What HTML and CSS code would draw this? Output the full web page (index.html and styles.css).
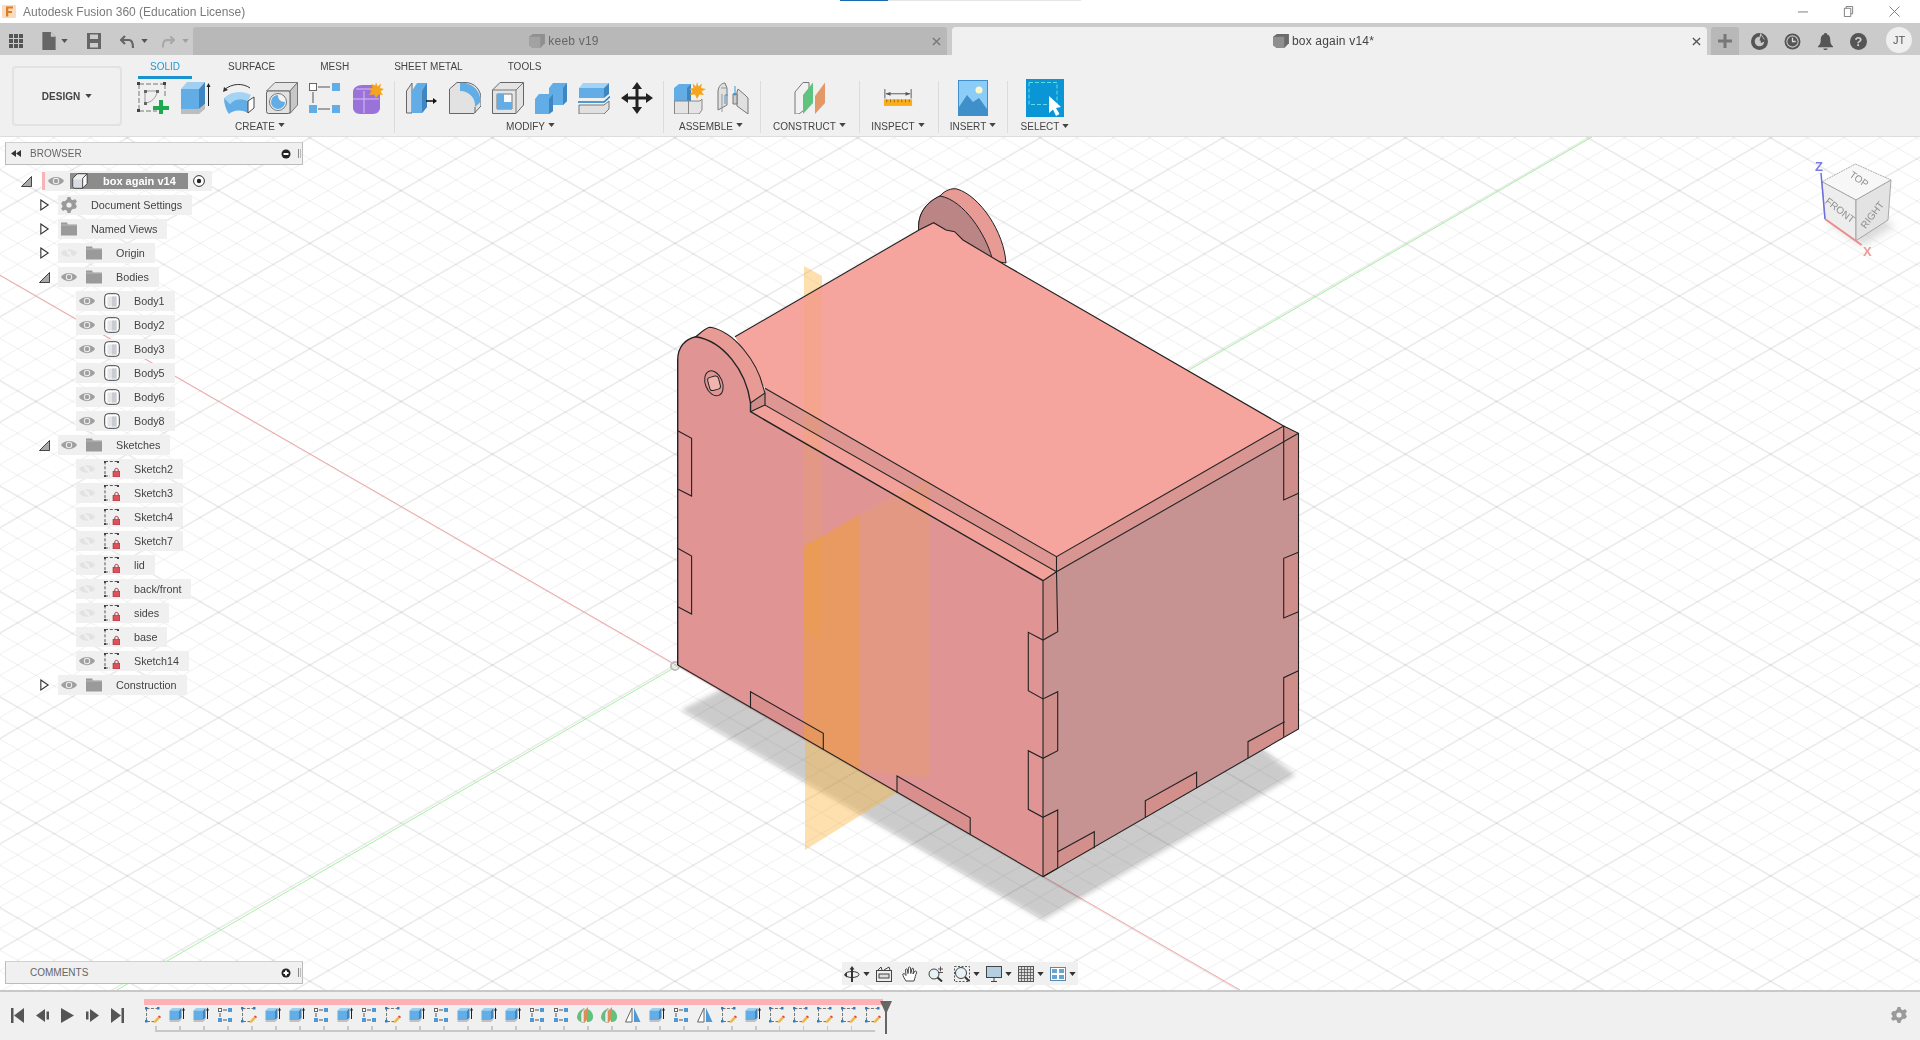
FILE: index.html
```html
<!DOCTYPE html>
<html lang="en">
<head>
<meta charset="utf-8">
<title>Autodesk Fusion 360</title>
<link rel="stylesheet" href="styles.css">
</head>
<body>
<svg class="defs" aria-hidden="true">
  <defs>
    <symbol id="i-sketch" viewBox="0 0 32 32">
      <path d="M2 2H28M2 2V29M2 29H20M28 2V14" fill="none" stroke="#777" stroke-width="1" stroke-dasharray="5 2"/>
      <rect x="0" y="0" width="3" height="3" fill="#444"/><rect x="26" y="0" width="3" height="3" fill="#444"/><rect x="0" y="27" width="3" height="3" fill="#444"/>
      <path d="M8 9H20M8 9V21M20 9C20 15 14 21 8 21" fill="none" stroke="#999" stroke-width="1"/>
      <rect x="7" y="8" width="3" height="3" fill="#666"/><rect x="19" y="8" width="3" height="3" fill="#666"/><rect x="7" y="20" width="3" height="3" fill="#666"/>
      <path d="M22 18h4v6h6v4h-6v5h-4v-5h-6v-4h6z" fill="#1ea84f"/>
    </symbol>
    <symbol id="i-extrude" viewBox="0 0 32 32">
      <path d="M1 7L7 0H25L19 7Z" fill="#9fd0f2"/>
      <path d="M1 7H19V27H1Z" fill="#62ade6"/>
      <path d="M19 7L25 0V22L19 27Z" fill="#3f86c0"/>
      <path d="M1 27H19L25 22V27L19 32H1Z" fill="#bdbdbd"/>
      <path d="M28.5 24V3" stroke="#222" stroke-width="1"/><path d="M26.5 5L28.5 1L30.5 5Z" fill="#222"/>
    </symbol>
    <symbol id="i-revolve" viewBox="0 0 32 32">
      <path d="M1 8C9 1 20 1 27 6" fill="none" stroke="#333" stroke-width="1"/><path d="M0 10L1 5L5 8Z" fill="#333"/>
      <path d="M1 16C8 9 19 8 28 13L25 19C18 16 11 17 7 22Z" fill="#a4d4f4"/>
      <path d="M1 16L7 22C11 17 18 16 25 19V31C18 27 10 28 6 32C3 28 1 22 1 16Z" fill="#62ade6"/>
      <path d="M25 19L31 15V26L25 31Z" fill="#fff" stroke="#444" stroke-width="1"/>
    </symbol>
    <symbol id="i-hole" viewBox="0 0 32 32">
      <path d="M.5 9L9 .5H31.5L24 9Z" fill="#e6e6e6" stroke="#777"/>
      <path d="M24 9L31.5 .5V23L24 31.5Z" fill="#c7c7c7" stroke="#777"/>
      <rect x=".5" y="9" width="23.5" height="22.5" rx="2" fill="#e2e2e2" stroke="#666"/>
      <circle cx="12" cy="20" r="8.5" fill="#f3f3f3" stroke="#777"/>
      <path d="M12 13A7 7 0 1 0 19 20C14 20 12 17 12 13Z" fill="#62ade6"/>
    </symbol>
    <symbol id="i-pattern" viewBox="0 0 32 32">
      <rect x=".5" y="1.500" width="7" height="7" fill="#fff" stroke="#666"/><rect x="23" y="1" width="8" height="8" fill="#62ade6"/>
      <rect x="0" y="23" width="8" height="8" fill="#62ade6"/><rect x="23" y="23" width="8" height="8" fill="#62ade6"/>
      <path d="M9 5H21M4 10V21M9 27H21" stroke="#555" stroke-width="1"/>
    </symbol>
    <symbol id="i-form" viewBox="0 0 32 32">
      <path d="M1 10C1 6 5 3 10 3H22L28 8V26C28 29 25 32 21 32H8C4 32 1 29 1 26Z" fill="#9b72d9"/>
      <path d="M1 17H27M12 9V31M4 7H22" stroke="#d6c2ef" stroke-width="1" fill="none"/>
      <path d="M24 0L25.500 4.500L29 1.500L28 6L32 7L28.500 9.500L31 13L26.500 12.500L24 16L22 12.500L17 13L19.500 9L16 7L20.500 6L19.500 1.500L23 4.500Z" fill="#f5a41d"/>
    </symbol>
    <symbol id="i-press" viewBox="0 0 32 32">
      <path d="M.5 9L6 1V31H.5Z" fill="#e4e4e4" stroke="#666"/>
      <path d="M6 9L11 1H21V25L16 31H6Z" fill="#62ade6"/>
      <path d="M16 9L21 1V25L16 31Z" fill="#3f86c0"/>
      <path d="M20 19H28" stroke="#111" stroke-width="1.500"/><path d="M27 16L31 19L27 22Z" fill="#111"/>
    </symbol>
    <symbol id="i-fillet" viewBox="0 0 32 32">
      <path d="M.5 31.500V7L8 .5H16C26 .5 32 8 32 17V24L25 31.500Z" fill="#e2e2e2" stroke="#666"/>
      <path d="M11 .8C22 0 32 8 31.500 20L26 25C27 16 20 9 11 9Z" fill="#62ade6"/>
      <path d="M26 25V31" stroke="#666"/>
    </symbol>
    <symbol id="i-shell" viewBox="0 0 32 32">
      <path d="M.5 8L8 .5H31.500V23L24 31.500H.5Z" fill="#e4e4e4" stroke="#666"/>
      <path d="M24 8H.5M24 8V31M24 8L31 1" stroke="#777" fill="none"/>
      <path d="M5 12H20V27H5Z" fill="#fafafa" stroke="#777"/>
      <path d="M5 12H12V20H20V27H5Z" fill="#62ade6"/>
    </symbol>
    <symbol id="i-combine" viewBox="0 0 32 32">
      <path d="M14 6L18 1H32V19L28 23H14Z" fill="#62ade6"/>
      <path d="M28 6L32 1V19L28 23Z" fill="#3f86c0"/>
      <path d="M0 17L4 12H18V29L14 32H0Z" fill="#62ade6"/>
      <path d="M14 17L18 12V29L14 32Z" fill="#3f86c0"/>
    </symbol>
    <symbol id="i-split" viewBox="0 0 32 32">
      <path d="M1 6L5 1H31L26 6Z" fill="#a4d4f4"/>
      <path d="M1 6H26V16H1Z" fill="#62ade6"/><path d="M26 6L31 1V12L26 16Z" fill="#3f86c0"/>
      <path d="M1 23H26L31 19V27L26 32H1Z" fill="#e0e0e0" stroke="#777"/>
      <path d="M0 20H26L32 14.500" fill="none" stroke="#1a7ec8" stroke-width="1.500"/>
    </symbol>
    <symbol id="i-move" viewBox="0 0 32 32">
      <path d="M16 0L21 7H17.500V14.500H25V11L32 16L25 21V17.500H17.500V25H21L16 32L11 25H14.500V17.500H7V21L0 16L7 11V14.500H14.500V7H11Z" fill="#222"/>
    </symbol>
    <symbol id="i-new" viewBox="0 0 32 32">
      <path d="M0 19V6L5 2H17V19Z" fill="#62ade6"/><path d="M0 6H13V19H0Z" fill="#62ade6"/><path d="M13 6L17 2V19H13Z" fill="#3f86c0"/>
      <rect x=".5" y="19" width="14" height="13" fill="#e4e4e4" stroke="#888"/><path d="M14.500 19H26L28 17V28L25 32H14.500Z" fill="#e4e4e4" stroke="#888"/>
      <path d="M23 0L24.500 4.500L28 1.500L27 6L32 7L27.500 9.500L30 13L25.500 12.500L23 17L21 12.500L16 13L18.500 9L15 7L19.500 6L18.500 1.500L22 4.500Z" fill="#f5a41d"/>
    </symbol>
    <symbol id="i-joint" viewBox="0 0 32 32">
      <path d="M1 28V10C1 4 5 1 8 1L10 6V23Z" fill="#e0e0e0" stroke="#777"/>
      <path d="M10 6H4M5 12V30" stroke="#999" fill="none"/>
      <path d="M21 7L28 13L31 16V32L20 24V10Z" fill="#e0e0e0" stroke="#777"/>
      <path d="M16 12H20V22H16Z" fill="#cfcfcf" stroke="#777"/>
      <path d="M8 22V13H11M18 4V13" stroke="#3f97d8" stroke-width="1" fill="none"/>
      <path d="M16 11L18 14L20 11Z" fill="#3f97d8"/>
    </symbol>
    <symbol id="i-construct" viewBox="0 0 32 32">
      <path d="M1 10L9 .5H15V24L5 32H1Z" fill="#f1f1f1" stroke="#777"/>
      <path d="M9 13L19 .5V21L9 32Z" fill="#5fc27e"/>
      <path d="M21 14L31 .5V21L21 32Z" fill="#e29867"/>
    </symbol>
    <symbol id="i-inspect" viewBox="0 0 32 18">
      <path d="M2 0V10M30 0V10M3 5H29" stroke="#555" fill="none"/>
      <path d="M3 5L8 3V7ZM29 5L24 3V7Z" fill="#555"/>
      <rect x="1" y="11" width="30" height="7" fill="#f9ad1a"/>
      <path d="M4 11v3M8 11v3M12 11v3M16 11v3M20 11v3M24 11v3M28 11v3" stroke="#9b6a10"/>
    </symbol>
    <symbol id="i-insert" viewBox="0 0 30 36">
      <rect x=".5" y=".5" width="29" height="35" fill="#8ccdf7" stroke="#3f8fca"/>
      <circle cx="21" cy="10" r="3.500" fill="#fdf9c8"/>
      <path d="M1 27L9 15L15 22L21 18L29 29V35H1Z" fill="#3f8fca"/>
    </symbol>
    <symbol id="i-select" viewBox="0 0 38 38">
      <rect width="38" height="38" fill="#0a96d6"/>
      <rect x="3" y="3.500" width="28" height="22" fill="none" stroke="#5fdde0" stroke-width="1" stroke-dasharray="4 2"/>
      <path d="M23 17V34L27 30.500L30 37L33.500 35L30 29L35 28Z" fill="#fff"/>
    </symbol>

    <symbol id="t-sk" viewBox="0 0 16 16">
      <path d="M1.500 1.500H13.500M1.500 1.500V14.500H9" fill="none" stroke="#777" stroke-dasharray="3 1.500"/>
      <rect x="0" y="0" width="2.500" height="2.500" fill="#2d7fc2"/><rect x="12" y="0" width="2.500" height="2.500" fill="#2d7fc2"/><rect x="0" y="13" width="2.500" height="2.500" fill="#2d7fc2"/>
      <path d="M9 14L14 8.500L16 10L11 15.500L8.500 16Z" fill="#f0b545"/><path d="M14 8.500L16 10L15 11L13 9.500Z" fill="#e0404a"/>
    </symbol>
    <symbol id="t-ext" viewBox="0 0 16 16">
      <path d="M.5 3.500L3 1H12.500L10 3.500Z" fill="#9fd0f2"/>
      <path d="M.5 3.500H10V13H.5Z" fill="#62ade6"/><path d="M10 3.500L12.500 1V11L10 13Z" fill="#3f86c0"/>
      <path d="M.5 13H10L12.500 11V12.500L10 15H.5Z" fill="#c2c2c2"/>
      <path d="M14.500 12V2" stroke="#222"/><path d="M13 3.500L14.500 .5L16 3.500Z" fill="#222"/>
    </symbol>
    <symbol id="t-pat" viewBox="0 0 16 16">
      <rect x="1.500" y="1.500" width="3" height="3" fill="#fff" stroke="#666"/><rect x="11" y="1" width="4" height="4" fill="#4f9ad6"/>
      <rect x="1" y="11" width="4" height="4" fill="#4f9ad6"/><rect x="11" y="11" width="4" height="4" fill="#4f9ad6"/>
      <path d="M6 3H10M3 6V10M6 13H10" stroke="#555"/>
    </symbol>
    <symbol id="t-con" viewBox="0 0 16 16">
      <path d="M0 11C0 6 3 3 6 2V15C3 15 1 14 0 11Z" fill="#5fc27e"/>
      <path d="M10 2C14 3 16 6 16 10C16 13 14 15 10 15Z" fill="#5fc27e"/>
      <path d="M4 6L7 1V16L4 15Z" fill="#eee" stroke="#888" stroke-width=".5"/>
      <path d="M7 4L11 0V12L7 16Z" fill="#de8d55"/>
    </symbol>
    <symbol id="t-mir" viewBox="0 0 16 16">
      <path d="M7 1V15H.5Z" fill="#fff" stroke="#666"/><path d="M9 1L15.500 15H9Z" fill="#4f9ad6"/>
    </symbol>

    <symbol id="u-eye" viewBox="0 0 16 12">
      <path d="M0 6C3 .5 13 .5 16 6C13 11.500 3 11.500 0 6Z" fill="#a0a0a0"/>
      <circle cx="8" cy="6" r="3.200" fill="#f0f0f0"/><circle cx="8" cy="6" r="2.200" fill="#a0a0a0"/>
    </symbol>
    <symbol id="u-eyeoff" viewBox="0 0 16 12">
      <path d="M0 6C3 1 13 1 16 6C13 11 3 11 0 6Z" fill="#e2e2e2"/>
      <path d="M3 0L13 12" stroke="#f2f2f2" stroke-width="1.500"/>
      <circle cx="8" cy="6" r="2" fill="#efefef"/>
    </symbol>
    <symbol id="u-folder" viewBox="0 0 16 13">
      <path d="M0 0H6L7 2H16V13H0Z" fill="#9a9a9a"/><path d="M0 2.500H16" stroke="#c9c9c9" stroke-width=".7"/>
    </symbol>
    <symbol id="u-gear" viewBox="0 0 16 16">
      <path d="M6.500 0H9.500L10 2.300L12 3.200L14 2L16 4.500L14.400 6.200L15 8L16 9.500L14 12L12 11.800L10 13.700L9.500 16H6.500L6 13.700L4 12.800L2 14L0 11.500L1.600 9.800L1 8L0 6.500L2 4L4 4.200L6 2.300Z" fill="#9a9a9a"/>
      <circle cx="8" cy="8" r="2.600" fill="#f0f0f0"/>
    </symbol>
    <symbol id="u-body" viewBox="0 0 16 16">
      <rect x=".7" y=".7" width="14.600" height="14.600" rx="3.500" fill="#fff" stroke="#444"/>
      <rect x="3.500" y="3.500" width="9" height="10" fill="#e2e4e8"/><rect x="8" y="3.500" width="4.500" height="10" fill="#c9ccd2"/>
    </symbol>
    <symbol id="u-comp" viewBox="0 0 18 18">
      <path d="M1 6L6 1H17V12L12 17H3C2 17 1 16 1 15Z" fill="#fff" stroke="#333"/>
      <path d="M2 7L6 2H16L12 7Z" fill="#eceef2"/><path d="M2 7H12V16H2Z" fill="#d9dce2"/>
      <path d="M12 6V17M12 6L17 1" stroke="#333" fill="none"/>
    </symbol>
    <symbol id="u-lock" viewBox="0 0 16 16">
      <path d="M1 .5H13.500M1 .5V15H6" fill="none" stroke="#555" stroke-dasharray="3 1.800"/>
      <rect x="0" y="0" width="2" height="2" fill="#444"/><rect x="13" y="0" width="2" height="2" fill="#444"/><rect x="0" y="14" width="2" height="2" fill="#444"/>
      <rect x="9" y="10.500" width="7" height="5.500" fill="#d9535d" stroke="#9c2c35" stroke-width=".6"/>
      <path d="M10.800 10.500V9C10.800 6.800 14.200 6.800 14.200 9V10.500" fill="none" stroke="#9c2c35"/>
    </symbol>
    <symbol id="u-open" viewBox="0 0 12 14"><path d="M2 1.500L10 7L2 12.500Z" fill="#fff" stroke="#333" stroke-width="1.200"/></symbol>
    <symbol id="u-down" viewBox="0 0 12 12"><path d="M.5 11.500L11.500 .5V11.500Z" fill="#a9a9a9" stroke="#333"/></symbol>

    <pattern id="grid-a" width="300" height="105.42" patternUnits="userSpaceOnUse" patternTransform="translate(675 665) skewY(30)">
      <path d="M0 21.080H300M0 42.170H300M0 63.250H300M0 84.340H300" stroke="#f0f0f0" stroke-width="1"/>
      <path d="M0 0H300M0 105.420H300" stroke="#dadada" stroke-width="1.200"/>
    </pattern>
    <pattern id="grid-b" width="300" height="105.42" patternUnits="userSpaceOnUse" patternTransform="translate(675 665) skewY(-30)">
      <path d="M0 21.080H300M0 42.170H300M0 63.250H300M0 84.340H300" stroke="#f0f0f0" stroke-width="1"/>
      <path d="M0 0H300M0 105.420H300" stroke="#dadada" stroke-width="1.200"/>
    </pattern>
    <filter id="soft" x="-10%" y="-10%" width="120%" height="120%"><feGaussianBlur stdDeviation="2.500"/></filter>
    <filter id="soft-more" x="-30%" y="-30%" width="160%" height="160%"><feGaussianBlur stdDeviation="4"/></filter>
  </defs>
</svg>

<div class="app">
  <header class="titlebar">
    <svg class="logo" viewBox="0 0 14 13"><rect width="14" height="13" rx="1" fill="#f7dcc0"/><path d="M4 1.500H11V3.500H6.300V6H10V8H6.300V11.500H4Z" fill="#e07b20"/></svg>
    <span class="title-text">Autodesk Fusion 360 (Education License)</span>
    <div class="progress"><span class="progress-fill"></span></div>
    <div class="winctl">
      <svg class="win-ic" viewBox="0 0 12 12"><path d="M1 6.500H12" stroke="#777"/></svg>
      <svg class="win-ic" viewBox="0 0 12 12"><path d="M3.500 2.500V.5H10.500V8.500H8.500M1.500 2.500H8.500V11.500H1.500Z" fill="none" stroke="#777"/></svg>
      <svg class="win-ic" viewBox="0 0 12 12"><path d="M.5 .5L11.500 11.500M11.500 .5L.5 11.500" stroke="#777"/></svg>
    </div>
  </header>

  <div class="tabstrip">
    <div class="qat">
      <svg class="q-grid" viewBox="0 0 14 14"><path d="M0 0h4v4H0zM5 0h4v4H5zM10 0h4v4h-4zM0 5h4v4H0zM5 5h4v4H5zM10 5h4v4h-4zM0 10h4v4H0zM5 10h4v4H5zM10 10h4v4h-4z" fill="#555"/></svg>
      <svg class="q-file" viewBox="0 0 14 19"><path d="M0 0H9L14 5V19H0Z" fill="#666"/><path d="M9 0V5H14Z" fill="#ccc"/></svg>
      <svg class="caret q-c1" viewBox="0 0 8 5"><path d="M0 0H8L4 5Z" fill="#555"/></svg>
      <svg class="q-save" viewBox="0 0 14 16"><path d="M0 0H14V16H0Z" fill="#666"/><path d="M3 1.500H11V6H3ZM3 10H11V14.500H3Z" fill="#ccc"/></svg>
      <svg class="q-undo" viewBox="0 0 15 15"><path d="M5 2L1 6L5 10M1 6H9C12 6 13 9 13 14" fill="none" stroke="#666" stroke-width="2.200"/></svg>
      <svg class="caret q-c2" viewBox="0 0 8 5"><path d="M0 0H8L4 5Z" fill="#555"/></svg>
      <svg class="q-redo" viewBox="0 0 15 15"><path d="M10 2L14 6L10 10M14 6H6C3 6 2 9 2 14" fill="none" stroke="#a8a8a8" stroke-width="2.200"/></svg>
      <svg class="caret q-c3" viewBox="0 0 8 5"><path d="M0 0H8L4 5Z" fill="#a0a0a0"/></svg>
    </div>
    <div class="tab tab-back">
      <span class="tab-label"><svg class="tab-cube" viewBox="0 0 17 15"><path d="M0 3L4 0H17V10L12 15H4L0 12Z" fill="#8f8f8f"/><path d="M0 3H12V15H4L0 12Z" fill="#a2a2a2"/></svg>keeb v19</span>
      <svg class="tab-x" viewBox="0 0 10 10"><path d="M1 1L9 9M9 1L1 9" stroke="#777" stroke-width="1.500"/></svg>
    </div>
    <div class="tab tab-active">
      <span class="tab-label"><svg class="tab-cube" viewBox="0 0 17 15"><path d="M0 3L4 0H17V10L12 15H4L0 12Z" fill="#6a6a6a"/><path d="M0 3H12V15H4L0 12Z" fill="#8f8f8f"/></svg>box again v14*</span>
      <svg class="tab-x" viewBox="0 0 10 10"><path d="M1 1L9 9M9 1L1 9" stroke="#555" stroke-width="1.500"/></svg>
    </div>
    <div class="tab-plus"><svg viewBox="0 0 14 14" class="plus-ic"><path d="M5.500 0h3v5.500H14v3H8.500V14h-3V8.500H0v-3h5.500z" fill="#777"/></svg></div>
    <div class="status-icons">
      <svg class="st-ic" viewBox="0 0 16 16"><circle cx="8" cy="8" r="8" fill="#555"/><path d="M8 3.500A4.500 4.500 0 1 0 12.500 8L9.500 9.500L8 3.500Z" fill="#c8c8c8"/><path d="M9 0L13 6L7 7Z" fill="#c8c8c8"/><path d="M9.500 2L12.500 6.500L8 7Z" fill="#555"/></svg>
      <svg class="st-ic" viewBox="0 0 16 16"><circle cx="8" cy="8" r="7.500" fill="#555"/><circle cx="8" cy="8" r="5.800" fill="#c8c8c8"/><circle cx="8" cy="8" r="4.800" fill="#555"/><path d="M8 4.500V8H11" fill="none" stroke="#ddd" stroke-width="1.200"/></svg>
      <svg class="st-ic" viewBox="0 0 16 16"><path d="M8 0C9 0 9.500 .5 9.500 1.500C12 2 12.500 4.500 12.500 7C12.500 10 13.500 11 15 12.500V13.500H1V12.500C2.500 11 3.500 10 3.500 7C3.500 4.500 4 2 6.500 1.500C6.500 .5 7 0 8 0ZM6 14.500H10C10 16.500 6 16.500 6 14.500Z" fill="#555"/></svg>
      <svg class="st-ic" viewBox="0 0 16 16"><circle cx="8" cy="8" r="8" fill="#555"/><text x="8" y="12.500" class="help-q">?</text></svg>
      <span class="avatar">JT</span>
    </div>
  </div>

  <div class="ribbon">
    <div class="design-btn">DESIGN<svg class="caret" viewBox="0 0 8 5"><path d="M0 0H8L4 5Z" fill="#444"/></svg></div>
    <div class="ribbon-main">
      <nav class="ribbon-tabs">
        <span class="rt rt-solid">SOLID</span>
        <span class="rt rt-surface">SURFACE</span>
        <span class="rt rt-mesh">MESH</span>
        <span class="rt rt-sheet">SHEET METAL</span>
        <span class="rt rt-tools">TOOLS</span>
      </nav>
      <div class="panels">
        <section class="panel p-create">
          <div class="icons">
            <svg class="ric"><use href="#i-sketch"/></svg><svg class="ric"><use href="#i-extrude"/></svg><svg class="ric"><use href="#i-revolve"/></svg><svg class="ric"><use href="#i-hole"/></svg><svg class="ric"><use href="#i-pattern"/></svg><svg class="ric"><use href="#i-form"/></svg>
          </div>
          <div class="plabel">CREATE<svg class="caret" viewBox="0 0 8 5"><path d="M0 0H8L4 5Z" fill="#444"/></svg></div>
        </section>
        <section class="panel p-modify">
          <div class="icons">
            <svg class="ric"><use href="#i-press"/></svg><svg class="ric"><use href="#i-fillet"/></svg><svg class="ric"><use href="#i-shell"/></svg><svg class="ric"><use href="#i-combine"/></svg><svg class="ric"><use href="#i-split"/></svg><svg class="ric"><use href="#i-move"/></svg>
          </div>
          <div class="plabel">MODIFY<svg class="caret" viewBox="0 0 8 5"><path d="M0 0H8L4 5Z" fill="#444"/></svg></div>
        </section>
        <section class="panel p-assemble">
          <div class="icons">
            <svg class="ric"><use href="#i-new"/></svg><svg class="ric"><use href="#i-joint"/></svg>
          </div>
          <div class="plabel">ASSEMBLE<svg class="caret" viewBox="0 0 8 5"><path d="M0 0H8L4 5Z" fill="#444"/></svg></div>
        </section>
        <section class="panel p-construct">
          <div class="icons"><svg class="ric"><use href="#i-construct"/></svg></div>
          <div class="plabel">CONSTRUCT<svg class="caret" viewBox="0 0 8 5"><path d="M0 0H8L4 5Z" fill="#444"/></svg></div>
        </section>
        <section class="panel p-inspect">
          <div class="icons"><svg class="ric-inspect"><use href="#i-inspect"/></svg></div>
          <div class="plabel">INSPECT<svg class="caret" viewBox="0 0 8 5"><path d="M0 0H8L4 5Z" fill="#444"/></svg></div>
        </section>
        <section class="panel p-insert">
          <div class="icons"><svg class="ric-insert"><use href="#i-insert"/></svg></div>
          <div class="plabel">INSERT<svg class="caret" viewBox="0 0 8 5"><path d="M0 0H8L4 5Z" fill="#444"/></svg></div>
        </section>
        <section class="panel p-select">
          <div class="icons"><svg class="ric-select"><use href="#i-select"/></svg></div>
          <div class="plabel">SELECT<svg class="caret" viewBox="0 0 8 5"><path d="M0 0H8L4 5Z" fill="#444"/></svg></div>
        </section>
      </div>
    </div>
  </div>

  <main class="viewport">
    <svg class="canvas" viewBox="0 137 1920 853">
      <rect x="0" y="137" width="1920" height="853" fill="#fff"/>
      <rect x="0" y="137" width="1920" height="853" fill="url(#grid-a)"/>
      <rect class="grid-b" x="0" y="137" width="1920" height="853" fill="url(#grid-b)"/>
      <path d="M0 275.300L1240 990" stroke="#f4a6a6" stroke-width="1"/>
      <path d="M1592 137L117 990" stroke="#a6f0a2" stroke-width="1"/>
      <circle cx="675" cy="666" r="4" fill="none" stroke="#bdbdbd" stroke-width="2"/>

      <path d="M681 710L1043 920L1295.500 775L1200 700L800 650Z" fill="#000" opacity=".2" filter="url(#soft)"/>
      <path d="M804 266L822 276V290L804 300Z" fill="#f9b233" opacity=".4"/>
      <path d="M805 738L898 792L805 850Z" fill="#f9b233" opacity=".4"/>

      <!-- back ear -->
      <path d="M918.800 232C917 215 925 203 940 196C945 190 952 188 957 189C980 196 1004 232 1006 263L1000 262Z" fill="#e89a94" stroke="#222" stroke-width="1"/>
      <path d="M918.800 232C917 215 925 203 940 196C964 200 986 235 992 258Z" fill="#bb8585"/>
      <path d="M918.800 232C917 215 925 203 940 196C964 200 986 235 992 258" fill="none" stroke="#222" stroke-width="1"/>

      <!-- top -->
      <path d="M735 336.700L919 230L933.600 222.700L946 230L954.600 231.700L963 240L1005 265L1283.700 426L1056.500 556.700L765 388.300Z" fill="#f6a49e"/>
      <!-- ledge -->
      <path d="M765 388.300L1056.500 556.700V571.700L765 405Z" fill="#dd9692"/>
      <path d="M750.500 411.700L765 405L1056.500 571.700L1043 580.700Z" fill="#f2a09a"/>
      <!-- front face -->
      <path d="M677.700 665V360C677.700 347 685 339 695.800 336.700C723 341 746 370 750.500 403V411.700L1043 580.700V876.700Z" fill="#e09594"/>
      <path d="M695.800 336.700C703 331 706 327.300 710.500 327.300C735 332 757 362 763 386.700L765 393L750.500 403C746 370 723 341 695.800 336.700Z" fill="#e89a94"/>
      <path d="M750.500 403L765 393V405L750.500 411.700Z" fill="#cf8d8a"/>
      <!-- right face -->
      <path d="M1056.500 571.700L1298.500 433.300V729L1043 876.700V580.700Z" fill="#c69292"/>
      <path d="M1056.500 556.700L1283.700 426L1298.500 433.300L1056.500 571.700Z" fill="#d99592"/>
      <path d="M1283.700 426L1298.500 433.300V493.300L1283.700 500ZM1283.700 558.300L1298.500 552.300V611.700L1283.700 618ZM1283.700 677.700L1298.500 670.700V729L1283.700 736.700Z" fill="#d08e8b"/>
      <path d="M1043 580.700L1056.500 571.700L1057.700 631.700L1043 640ZM1043 699L1057.700 691.700V750.700L1043 758.300ZM1043 817.300L1057.700 810V868.300L1043 876.700Z" fill="#d08e8b"/>
      <path d="M1057.700 851.700L1094.300 831.700V848.300L1057.700 868.300ZM1145.300 800.700L1196.600 772.300V788.300L1145.300 817.300ZM1248 741.700L1284.600 721.700V736.700L1248 758.300Z" fill="#d28f8c"/>
      <path d="M750.500 691.700L823.300 733.300V750L750.500 708.300ZM897 776L970.200 817.700V834.300L897 792.700Z" fill="#d98f8d"/>

      <!-- section plane ghost -->
      <path d="M804 296.700L822 286V548L804 546.700Z" fill="#f2a838" opacity=".16"/>
      <path d="M804 546.700L860 514V770L804 738Z" fill="#f2a030" opacity=".5"/>
      <path d="M860 514L930 479V778L860 770Z" fill="#eaa060" opacity=".3"/>
      <path d="M804 546.700L822 536V640L804 630Z" fill="#f2a030" opacity=".2"/>

      <!-- edges -->
      <g fill="none" stroke="#222" stroke-width="1.100">
        <path d="M735 336.700L919 230L933.600 222.700L946 230L954.600 231.700L963 240L1005 265L1283.700 426L1056.500 556.700L765 388.300"/>
        <path d="M677.700 665V360C677.700 347 685 339 695.800 336.700C723 341 746 370 750.500 403V411.700L1043 580.700" stroke-width="1.400"/>
        <path d="M695.800 336.700C703 331 706 327.300 710.500 327.300C735 332 757 362 763 386.700L765 393V405"/>
        <path d="M750.500 403L765 393M750.500 411.700L765 405L1056.500 571.700L1043 580.700M1056.500 556.700V571.700"/>
        <path d="M677.700 665L1043 876.700L1298.500 729V433.300L1283.700 426M1056.500 571.700L1298.500 433.300"/>
        <path d="M1043 580.700V876.700"/>
        <path d="M1056.500 571.700L1057.700 631.700L1043 640L1028.300 632.300V690.700L1043 699L1057.700 691.700V750.700L1043 758.300L1028.300 750.700V809.300L1043 817.300L1057.700 810V868.300L1043 876.700"/>
        <path d="M1283.700 426V500L1298.500 493.300M1298.500 552.300L1283.700 558.300V618L1298.500 611.700M1298.500 670.700L1283.700 677.700V736.700"/>
        <path d="M1057.700 851.700L1094.300 831.700V848.300M1145.300 817.300V800.700L1196.600 772.300V788.300M1248 758.300V741.700L1284.600 721.700"/>
        <path d="M750.500 708.300V691.700L823.300 733.300V750M897 792.700V776L970.200 817.700V834.300"/>
        <path d="M677.700 430.700L691.600 438.300V496L677.700 489M677.700 548.300L691.600 556V614L677.700 606.700"/>
      </g>
      <ellipse cx="713.900" cy="383.300" rx="8.500" ry="13" transform="rotate(-22 713.900 383.300)" fill="#e09594" stroke="#222" stroke-width="1"/>
      <rect x="708.500" y="376.500" width="11" height="13.500" rx="3" transform="rotate(-15 714 383)" fill="#f0b4ae" stroke="#222" stroke-width="1"/>

      <!-- view cube -->
      <path d="M1828 222L1862 246L1895 226L1860 205Z" fill="#bdbdbd" opacity=".55" filter="url(#soft-more)"/>
      <path d="M1822 181.700L1855.500 164L1891 180L1856 200Z" fill="#f7f7f7" stroke="#8c8c8c" stroke-width=".7" stroke-dasharray="2 .7"/>
      <path d="M1822 181.700L1856 200V240.700L1825 219Z" fill="#ededed" stroke="#8c8c8c" stroke-width=".7"/>
      <path d="M1856 200L1891 180L1888 220L1856 240.700Z" fill="#e3e3e3" stroke="#8c8c8c" stroke-width=".7"/>
      <path d="M1821 173L1825 219" stroke="#6d6de0" stroke-width="1.500"/>
      <path d="M1825 219L1861.600 245" stroke="#ec8d8d" stroke-width="2"/>
      <text x="1815" y="171" class="axis-z">Z</text>
      <text x="1863" y="256" class="axis-x">X</text>
      <text class="cube-text" transform="translate(1857 182) rotate(35)">TOP</text>
      <text class="cube-text" transform="translate(1838 213) rotate(38)">FRONT</text>
      <text class="cube-text" transform="translate(1875 217) rotate(-52)">RIGHT</text>
    </svg>

    <div class="side-panel browser-head">
      <svg class="collapse" viewBox="0 0 10 7"><path d="M5 0V7L0 3.500ZM10 0V7L5 3.500Z" fill="#333"/></svg>
      <span class="sp-title">BROWSER</span>
      <svg class="sp-btn" viewBox="0 0 10 10"><circle cx="5" cy="5" r="4.500" fill="#222"/><path d="M2.500 4h5v2h-5z" fill="#fff"/></svg>
      <span class="grip"></span>
    </div>

    <div class="tree">
      <div class="row d0">
        <svg class="tw-root"><use href="#u-down"/></svg>
        <span class="pinkbar"></span>
        <div class="pill pill-root">
          <svg class="uic"><use href="#u-eye"/></svg>
          <span class="root-label"><svg class="comp-ic"><use href="#u-comp"/></svg><b>box again v14</b></span>
          <svg class="radio" viewBox="0 0 12 12"><circle cx="6" cy="6" r="5.400" fill="#fff" stroke="#333"/><circle cx="6" cy="6" r="2.200" fill="#222"/></svg>
        </div>
      </div>
      <div class="row d1"><svg class="tw"><use href="#u-open"/></svg><div class="pill"><svg class="uic"><use href="#u-gear"/></svg><span class="lbl">Document Settings</span></div></div>
      <div class="row d1"><svg class="tw"><use href="#u-open"/></svg><div class="pill"><svg class="uic"><use href="#u-folder"/></svg><span class="lbl">Named Views</span></div></div>
      <div class="row d1"><svg class="tw"><use href="#u-open"/></svg><div class="pill"><svg class="uic"><use href="#u-eyeoff"/></svg><svg class="uic"><use href="#u-folder"/></svg><span class="lbl">Origin</span></div></div>
      <div class="row d1"><svg class="tw-d"><use href="#u-down"/></svg><div class="pill"><svg class="uic"><use href="#u-eye"/></svg><svg class="uic"><use href="#u-folder"/></svg><span class="lbl">Bodies</span></div></div>
      <div class="row d2"><div class="pill"><svg class="uic"><use href="#u-eye"/></svg><svg class="uic"><use href="#u-body"/></svg><span class="lbl">Body1</span></div></div>
      <div class="row d2"><div class="pill"><svg class="uic"><use href="#u-eye"/></svg><svg class="uic"><use href="#u-body"/></svg><span class="lbl">Body2</span></div></div>
      <div class="row d2"><div class="pill"><svg class="uic"><use href="#u-eye"/></svg><svg class="uic"><use href="#u-body"/></svg><span class="lbl">Body3</span></div></div>
      <div class="row d2"><div class="pill"><svg class="uic"><use href="#u-eye"/></svg><svg class="uic"><use href="#u-body"/></svg><span class="lbl">Body5</span></div></div>
      <div class="row d2"><div class="pill"><svg class="uic"><use href="#u-eye"/></svg><svg class="uic"><use href="#u-body"/></svg><span class="lbl">Body6</span></div></div>
      <div class="row d2"><div class="pill"><svg class="uic"><use href="#u-eye"/></svg><svg class="uic"><use href="#u-body"/></svg><span class="lbl">Body8</span></div></div>
      <div class="row d1"><svg class="tw-d"><use href="#u-down"/></svg><div class="pill"><svg class="uic"><use href="#u-eye"/></svg><svg class="uic"><use href="#u-folder"/></svg><span class="lbl">Sketches</span></div></div>
      <div class="row d2"><div class="pill"><svg class="uic"><use href="#u-eyeoff"/></svg><svg class="uic"><use href="#u-lock"/></svg><span class="lbl">Sketch2</span></div></div>
      <div class="row d2"><div class="pill"><svg class="uic"><use href="#u-eyeoff"/></svg><svg class="uic"><use href="#u-lock"/></svg><span class="lbl">Sketch3</span></div></div>
      <div class="row d2"><div class="pill"><svg class="uic"><use href="#u-eyeoff"/></svg><svg class="uic"><use href="#u-lock"/></svg><span class="lbl">Sketch4</span></div></div>
      <div class="row d2"><div class="pill"><svg class="uic"><use href="#u-eyeoff"/></svg><svg class="uic"><use href="#u-lock"/></svg><span class="lbl">Sketch7</span></div></div>
      <div class="row d2"><div class="pill"><svg class="uic"><use href="#u-eyeoff"/></svg><svg class="uic"><use href="#u-lock"/></svg><span class="lbl">lid</span></div></div>
      <div class="row d2"><div class="pill"><svg class="uic"><use href="#u-eyeoff"/></svg><svg class="uic"><use href="#u-lock"/></svg><span class="lbl">back/front</span></div></div>
      <div class="row d2"><div class="pill"><svg class="uic"><use href="#u-eyeoff"/></svg><svg class="uic"><use href="#u-lock"/></svg><span class="lbl">sides</span></div></div>
      <div class="row d2"><div class="pill"><svg class="uic"><use href="#u-eyeoff"/></svg><svg class="uic"><use href="#u-lock"/></svg><span class="lbl">base</span></div></div>
      <div class="row d2"><div class="pill"><svg class="uic"><use href="#u-eye"/></svg><svg class="uic"><use href="#u-lock"/></svg><span class="lbl">Sketch14</span></div></div>
      <div class="row d1"><svg class="tw"><use href="#u-open"/></svg><div class="pill"><svg class="uic"><use href="#u-eye"/></svg><svg class="uic"><use href="#u-folder"/></svg><span class="lbl">Construction</span></div></div>
    </div>

    <div class="side-panel comments">
      <span class="sp-title">COMMENTS</span>
      <svg class="sp-btn" viewBox="0 0 10 10"><circle cx="5" cy="5" r="4.500" fill="#222"/><path d="M4 2.500h2V4h1.500v2H6v1.500H4V6H2.500V4H4z" fill="#fff"/></svg>
      <span class="grip"></span>
    </div>

    <div class="navbar">
      <svg class="nv" viewBox="0 0 16 16"><path d="M8 0L10.500 3.500H9V16H7V3.500H5.500Z" fill="#333"/><ellipse cx="8" cy="8.500" rx="7" ry="3" fill="none" stroke="#333"/><path d="M0 9L3 6.500V11.500Z" fill="#333"/></svg>
      <svg class="caret nc" viewBox="0 0 8 5"><path d="M0 0H8L4 5Z" fill="#333"/></svg>
      <svg class="nv" viewBox="0 0 16 16"><rect x=".5" y="4.500" width="15" height="11" fill="#eee" stroke="#444"/><rect x="3" y="8" width="10" height="4" fill="#ddd" stroke="#444"/><path d="M2 4L5 1L6 4M8 4L13 1L14 4" fill="none" stroke="#444"/></svg>
      <svg class="nv" viewBox="0 0 16 16"><path d="M4 15C2 12 1 10 .8 8C2 7 3 8 4 9.500L3.500 3.500C4.500 2.500 5.500 3 5.500 4L6 7.500L6.500 1.500C7.500 .5 8.500 1 8.500 2L8.800 7.500L10 2.500C11 2 12 2.500 11.500 4L11 8L13 5C14 5 15 5.500 14.500 7C13.500 9 13 12 12 15Z" fill="#fff" stroke="#333" stroke-width=".9"/></svg>
      <svg class="nv" viewBox="0 0 16 16"><circle cx="6" cy="8" r="5" fill="#e7f2f7" stroke="#444"/><path d="M9.500 11.500L14 15.500" stroke="#333" stroke-width="2"/><path d="M10 3H15M12.500 .5V5.500M10 6.500H15" stroke="#444" stroke-width=".9"/></svg>
      <svg class="nv" viewBox="0 0 16 16"><rect x=".5" y=".5" width="15" height="15" fill="none" stroke="#555" stroke-dasharray="2 1.500"/><circle cx="7" cy="7" r="5.500" fill="#e7f2f7" stroke="#444"/><path d="M11 11L15 15" stroke="#333" stroke-width="2"/></svg>
      <svg class="caret nc" viewBox="0 0 8 5"><path d="M0 0H8L4 5Z" fill="#333"/></svg>
      <svg class="nv" viewBox="0 0 16 16"><rect x=".5" y=".5" width="15" height="11" fill="#b4cfe2" stroke="#444"/><path d="M5 15.500H11M8 12V15" stroke="#444"/></svg>
      <svg class="caret nc" viewBox="0 0 8 5"><path d="M0 0H8L4 5Z" fill="#333"/></svg>
      <svg class="nv" viewBox="0 0 16 16"><rect x=".5" y=".5" width="15" height="15" fill="#ddd" stroke="#555"/><path d="M3.500 1V15M6.500 1V15M9.500 1V15M12.500 1V15M1 3.500H15M1 6.500H15M1 9.500H15M1 12.500H15" stroke="#555" stroke-width=".8"/></svg>
      <svg class="caret nc" viewBox="0 0 8 5"><path d="M0 0H8L4 5Z" fill="#333"/></svg>
      <svg class="nv" viewBox="0 0 16 14"><rect x=".5" y=".5" width="15" height="13" fill="#fff" stroke="#5a88aa"/><path d="M2 2h5v4H2zM9 2h5v4H9zM2 8h5v4H2zM9 8h5v4H9z" fill="#6aa3cc"/></svg>
      <svg class="caret nc" viewBox="0 0 8 5"><path d="M0 0H8L4 5Z" fill="#333"/></svg>
    </div>
  </main>

  <footer class="timeline">
    <div class="transport">
      <svg class="tr" viewBox="0 0 13 15"><path d="M0 0H2.500V15H0ZM13 0V15L3 7.500Z" fill="#555"/></svg>
      <svg class="tr" viewBox="0 0 13 15"><path d="M9 1V14L0 7.500ZM10.500 3.500H13V11.500H10.500Z" fill="#555"/></svg>
      <svg class="tr" viewBox="0 0 13 15"><path d="M0 0L13 7.500L0 15Z" fill="#555"/></svg>
      <svg class="tr" viewBox="0 0 13 15"><path d="M0 3.500H2.500V11.500H0ZM4 1L13 7.500L4 14Z" fill="#555"/></svg>
      <svg class="tr" viewBox="0 0 13 15"><path d="M0 0L10 7.500L0 15ZM10.500 0H13V15H10.500Z" fill="#555"/></svg>
    </div>
    <div class="track">
      <div class="track-bar"></div>
      <div class="track-items">
        <svg class="ti"><use href="#t-sk"/></svg><svg class="ti"><use href="#t-ext"/></svg><svg class="ti"><use href="#t-ext"/></svg><svg class="ti"><use href="#t-pat"/></svg><svg class="ti"><use href="#t-sk"/></svg><svg class="ti"><use href="#t-ext"/></svg><svg class="ti"><use href="#t-ext"/></svg><svg class="ti"><use href="#t-pat"/></svg><svg class="ti"><use href="#t-ext"/></svg><svg class="ti"><use href="#t-pat"/></svg><svg class="ti"><use href="#t-sk"/></svg><svg class="ti"><use href="#t-ext"/></svg><svg class="ti"><use href="#t-pat"/></svg><svg class="ti"><use href="#t-ext"/></svg><svg class="ti"><use href="#t-ext"/></svg><svg class="ti"><use href="#t-ext"/></svg><svg class="ti"><use href="#t-pat"/></svg><svg class="ti"><use href="#t-pat"/></svg><svg class="ti"><use href="#t-con"/></svg><svg class="ti"><use href="#t-con"/></svg><svg class="ti"><use href="#t-mir"/></svg><svg class="ti"><use href="#t-ext"/></svg><svg class="ti"><use href="#t-pat"/></svg><svg class="ti"><use href="#t-mir"/></svg><svg class="ti"><use href="#t-sk"/></svg><svg class="ti"><use href="#t-ext"/></svg><svg class="ti"><use href="#t-sk"/></svg><svg class="ti"><use href="#t-sk"/></svg><svg class="ti"><use href="#t-sk"/></svg><svg class="ti"><use href="#t-sk"/></svg><svg class="ti"><use href="#t-sk"/></svg>
      </div>
      <div class="ruler"></div>
      <svg class="playhead" viewBox="0 0 12 34"><path d="M0 1H12L7 12V34H5V12Z" fill="#666"/></svg>
    </div>
    <svg class="tl-gear" viewBox="0 0 16 16"><path d="M6.500 0H9.500L10 2.300L12 3.200L14 2L16 4.500L14.400 6.200L15 8L16 9.500L14 12L12 11.800L10 13.700L9.500 16H6.500L6 13.700L4 12.800L2 14L0 11.500L1.600 9.800L1 8L0 6.500L2 4L4 4.200L6 2.300Z" fill="#9a9a9a"/><circle cx="8" cy="8" r="2.600" fill="#f0f0f0"/></svg>
  </footer>
</div>
</body>
</html>
```

FILE: styles.css
```css
* { box-sizing: border-box; }
html, body { margin: 0; height: 100%; overflow: hidden; }
body { font-family: "Liberation Sans", Arial, sans-serif; background: #fff; color: #444; }
svg { display: block; flex: none; }
.defs { position: absolute; width: 0; height: 0; }
.app { width: 1920px; height: 1040px; display: flex; flex-direction: column; }

/* Title bar */
.titlebar { height: 23px; flex: none; display: flex; align-items: center; background: #fff; position: relative; }
.logo { width: 14px; height: 13px; margin-left: 2px; }
.title-text { margin-left: 7px; font-size: 12px; color: #7a7a7a; }
.progress { position: absolute; left: 840px; top: 0; width: 241px; height: 1px; background: #e6e6e6; }
.progress-fill { display: block; width: 48px; height: 100%; background: #1a6ab0; }
.winctl { margin-left: auto; display: flex; gap: 35px; padding-right: 20px; }
.win-ic { width: 11px; height: 11px; }

/* Tab strip */
.tabstrip { height: 32px; flex: none; display: flex; background: #cbcbcb; padding-top: 4px; }
.qat { width: 193px; flex: none; display: flex; align-items: center; height: 28px; padding-left: 9px; }
.q-grid { width: 14px; height: 14px; }
.q-file { width: 14px; height: 18px; margin-left: 19px; }
.caret { width: 7px; height: 4px; margin-left: 5px; display: inline-block; }
.q-save { width: 14px; height: 16px; margin-left: 19px; }
.q-undo { width: 15px; height: 15px; margin-left: 19px; }
.q-c2 { margin-left: 6px; }
.q-redo { width: 14px; height: 15px; margin-left: 13px; }
.q-c3 { margin-left: 7px; }
.tab { height: 28px; display: flex; align-items: center; justify-content: center; position: relative; font-size: 12px; letter-spacing: .2px; padding-right: 12px; }
.tab-back { width: 754px; background: #b8b8b8; color: #666; border-radius: 3px 3px 0 0; margin-right: 5px; }
.tab-active { width: 755px; background: #f0f0f0; color: #444; border-radius: 4px 4px 0 0; }
.tab-label { display: flex; align-items: center; gap: 3px; }
.tab-cube { width: 16px; height: 14px; }
.tab-x { width: 9px; height: 9px; position: absolute; right: 6px; top: 10px; }
.tab-plus { width: 28px; height: 28px; margin-left: 4px; background: #b8b8b8; border-radius: 3px 3px 0 0; display: flex; align-items: center; justify-content: center; }
.plus-ic { width: 14px; height: 14px; }
.status-icons { display: flex; align-items: center; height: 28px; margin-left: 12px; gap: 16px; }
.st-ic { width: 17px; height: 17px; }
.help-q { font: bold 12px "Liberation Sans", Arial, sans-serif; fill: #d0d0d0; text-anchor: middle; }
.avatar { width: 26px; height: 26px; border-radius: 50%; background: #efefef; font-size: 11px; color: #555; display: flex; align-items: center; justify-content: center; margin-left: 3px; margin-top: -2px; }

/* Ribbon */
.ribbon { height: 82px; flex: none; background: #f0f0f0; border-bottom: 1px solid #ddd; display: flex; }
.design-btn { width: 110px; height: 60px; margin: 11px 0 0 12px; border: 2px solid #e2e2e2; border-radius: 4px; display: flex; align-items: center; justify-content: center; font-size: 10px; font-weight: bold; color: #444; flex: none; }
.ribbon-main { margin-left: 8px; display: flex; flex-direction: column; flex: 1; }
.ribbon-tabs { height: 24px; flex: none; display: flex; align-items: flex-start; font-size: 10px; color: #444; padding-top: 6px; }
.rt { display: block; text-align: center; }
.rt-solid { width: 54px; margin-left: 8px; color: #1c9ad6; height: 18px; border-bottom: 3px solid #1a94d0; padding-bottom: 3px; }
.rt-surface { margin-left: 36px; }
.rt-mesh { margin-left: 45px; }
.rt-sheet { margin-left: 45px; }
.rt-tools { margin-left: 45px; }
.panels { display: flex; height: 54px; }
.panel { display: flex; flex-direction: column; border-right: 1px solid #dcdcdc; height: 52px; margin-top: 2px; flex: none; }
.icons { height: 38px; margin-top: -2px; display: flex; align-items: center; justify-content: center; gap: 11px; }
.ric { width: 32px; height: 32px; }
.ric-inspect { width: 30px; height: 17px; }
.ric-insert { width: 30px; height: 36px; }
.ric-select { width: 38px; height: 38px; }
.plabel { height: 14px; font-size: 10px; display: flex; align-items: center; justify-content: center; color: #444; white-space: nowrap; margin-top: 3px; }
.plabel .caret { margin-left: 3px; margin-top: -2px; }
.p-create { width: 265px; padding-right: 4px; }
.p-modify { width: 269px; padding-right: 6px; padding-left: 6px; }
.p-modify .plabel { padding-left: 3px; }
.p-assemble { width: 97px; padding-right: 2px; }
.p-construct { width: 99px; padding-right: 1px; }
.p-inspect { width: 79px; padding-right: 2px; }
.p-insert { width: 69px; }
.p-select { width: 76px; border-right: 0; padding-right: 2px; }

/* Viewport */
.viewport { flex: 1; position: relative; overflow: hidden; background: #fff; }
.canvas { position: absolute; left: 0; top: 0; width: 1920px; height: 853px; }
.grid-b { mix-blend-mode: multiply; }
.axis-z { font: bold 13px "Liberation Sans", Arial, sans-serif; fill: #7a7ae6; }
.axis-x { font: bold 13px "Liberation Sans", Arial, sans-serif; fill: #ef9a9a; }
.cube-text { font: 10px "Liberation Sans", Arial, sans-serif; fill: #8f8f8f; text-anchor: middle; }

.side-panel { position: absolute; left: 5px; width: 298px; height: 23px; background: #f0f0f0; border: 1px solid #bcbcbc; border-top-color: #d0d0d0; display: flex; align-items: center; font-size: 10px; color: #666; }
.browser-head { top: 5px; }
.comments { top: 824px; }
.collapse { width: 10px; height: 7px; margin-left: 5px; }
.sp-title { margin-left: 9px; }
.comments .sp-title { margin-left: 24px; }
.sp-btn { width: 10px; height: 10px; margin-left: auto; }
.grip { width: 3px; height: 9px; border-left: 1px solid #888; border-right: 1px solid #bbb; margin: 0 1px 0 7px; }

.tree { position: absolute; left: 0; top: 34px; display: flex; flex-direction: column; gap: 4px; font-size: 10.800px; color: #444; }
.row { height: 20px; display: flex; align-items: center; }
.d0 { padding-left: 21px; }
.d1 { padding-left: 39px; }
.d2 { padding-left: 76px; }
.tw-root { width: 11px; height: 11px; margin-right: 10px; }
.tw { width: 11px; height: 14px; margin-right: 8px; }
.tw-d { width: 11px; height: 11px; margin-right: 8px; }
.pinkbar { width: 3px; height: 18px; background: #f9b3b8; }
.pill { display: flex; align-items: center; height: 20px; background: #f0f0f0; padding: 0 10px 0 3px; gap: 9px; }
.uic { width: 16px; height: 16px; }
.lbl { margin-left: 5px; white-space: nowrap; }
.pill-root { padding-right: 7px; gap: 6px; }
.root-label { width: 118px; height: 16px; background: #8c8c8c; display: flex; align-items: center; color: #fff; font-size: 11px; padding-left: 2px; }
.root-label b { margin-left: 15px; font-weight: bold; }
.comp-ic { width: 16px; height: 16px; }
.radio { width: 12px; height: 12px; margin-left: -1px; }

.navbar { position: absolute; left: 842px; top: 825px; width: 236px; height: 23px; background: #f0f0f0; display: flex; align-items: center; padding-left: 2px; }
.nv { width: 16px; height: 16px; margin-left: 10px; }
.nv:first-child { margin-left: 0; }
.nc { margin-left: 3px; margin-right: -4px; }

/* Timeline */
.timeline { height: 50px; flex: none; background: #f0f0f0; border-top: 2px solid #c8c8c8; display: flex; position: relative; }
.transport { display: flex; align-items: center; gap: 12px; padding-left: 11px; width: 144px; flex: none; height: 46px; }
.tr { width: 13px; height: 15px; }
.track { width: 745px; position: relative; padding-top: 7px; }
.track-bar { height: 6px; background: #ffb0b4; width: 739px; }
.track-items { display: flex; gap: 8px; padding: 2px 0 0 1px; }
.ti { width: 16px; height: 16px; }
.ruler { margin: 3px 0 0 11px; width: 720px; height: 6px; border-bottom: 2px solid #c8c8c8; background: repeating-linear-gradient(90deg, #c8c8c8 0 1.500px, transparent 1.500px 24px); }
.playhead { position: absolute; left: 736px; top: 8px; width: 12px; height: 34px; }
.tl-gear { width: 16px; height: 16px; margin: 15px 13px 0 auto; }
```
